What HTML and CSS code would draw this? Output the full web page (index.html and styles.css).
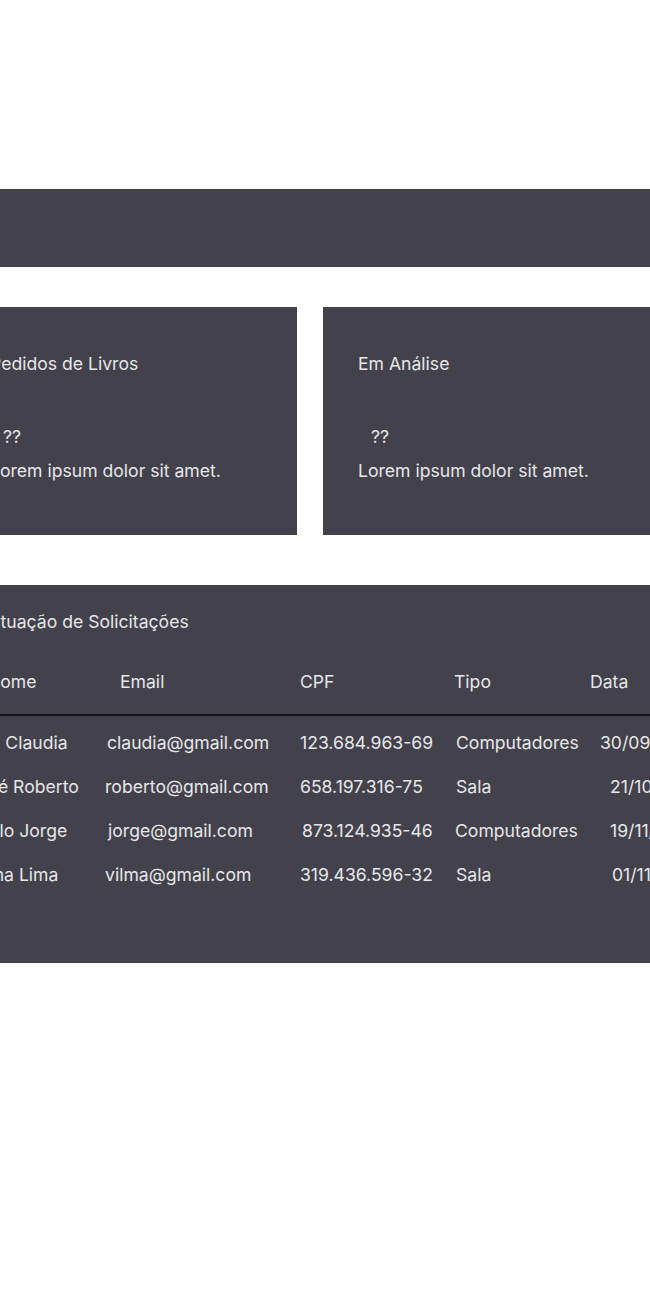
FILE: index.html
```html
<!DOCTYPE html>
<html lang="pt-BR">
<head>
<meta charset="utf-8">
<title>Painel</title>
<link rel="stylesheet" href="styles.css">
</head>
<body>
<div class="page">
  <header class="topbar"></header>
  <main class="content">
    <section class="cards">
      <article class="card">
        <h2 class="card-title">Pedidos de Livros</h2>
        <p class="card-count">??</p>
        <p class="card-text">Lorem ipsum dolor sit amet.</p>
      </article>
      <article class="card">
        <h2 class="card-title">Em Análise</h2>
        <p class="card-count">??</p>
        <p class="card-text">Lorem ipsum dolor sit amet.</p>
      </article>
    </section>
    <section class="panel">
      <h2 class="panel-title">Situação de Solicitações</h2>
      <div class="thead">
        <span>Nome</span><span>Email</span><span>CPF</span><span>Tipo</span><span>Data</span>
      </div>
      <div class="divider"></div>
      <div class="tbody">
        <div class="row"><span>Ana Claudia</span><span class="em1">claudia@gmail.com</span><span>123.684.963-69</span><span>Computadores</span><span>30/09/2022</span></div>
        <div class="row"><span>José Roberto</span><span>roberto@gmail.com</span><span>658.197.316-75</span><span>Sala</span><span class="d1">21/10/2022</span></div>
        <div class="row"><span>Paulo Jorge</span><span class="em2">jorge@gmail.com</span><span class="c1">873.124.935-46</span><span class="t1">Computadores</span><span class="d1">19/11/2022</span></div>
        <div class="row"><span>Vilma Lima</span><span>vilma@gmail.com</span><span>319.436.596-32</span><span>Sala</span><span class="d2">01/11/2022</span></div>
      </div>
    </section>
  </main>
</div>
</body>
</html>
```
FILE: styles.css
```css
html, body {
  margin: 0;
  padding: 0;
  background: #ffffff;
  overflow-x: hidden;
}

body {
  font-family: Inter, "Noto Sans", "Liberation Sans", sans-serif;
  font-size: 17.6px;
  line-height: 20px;
  color: #e6e6e8;
}

.page {
  width: 780px;
  margin-left: -45px;
  padding-top: 189px;
}

.topbar {
  height: 78px;
  background: #43424c;
}

.content {
  display: flex;
  flex-direction: column;
}

.cards {
  margin-top: 40px;
  display: grid;
  grid-template-columns: 342px 342px;
  column-gap: 26px;
}

.card {
  background: #43424c;
  height: 228px;
  box-sizing: border-box;
  padding: 47px 35px 0;
}

.card-title {
  margin: 0;
  font-size: inherit;
  font-weight: 400;
  line-height: 20px;
}

.card-count {
  margin: 53px 0 0 13px;
}

.card-text {
  margin: 14px 0 0;
}

.panel {
  margin-top: 50px;
  background: #43424c;
  height: 378px;
  box-sizing: border-box;
  padding-top: 27px;
}

.panel-title {
  margin: 0 0 0 30px;
  font-size: inherit;
  font-weight: 400;
  line-height: 20px;
}

.thead {
  margin-top: 40px;
  display: grid;
  grid-template-columns: 133px 180px 154px 136px 1fr;
  padding-left: 32px;
}

.divider {
  margin-top: 22px;
  height: 2px;
  background: #131318;
}

.tbody {
  margin-top: 17px;
  display: flex;
  flex-direction: column;
  row-gap: 24px;
}

.row {
  display: grid;
  grid-template-columns: 137px 195px 156px 144px 1fr;
  padding-left: 13px;
  white-space: nowrap;
}

.em1 { padding-left: 2px; }
.em2 { padding-left: 3px; }
.c1 { padding-left: 2px; }
.t1 { margin-left: -1px; }
.d1 { padding-left: 10px; }
.d2 { padding-left: 12px; }
```
